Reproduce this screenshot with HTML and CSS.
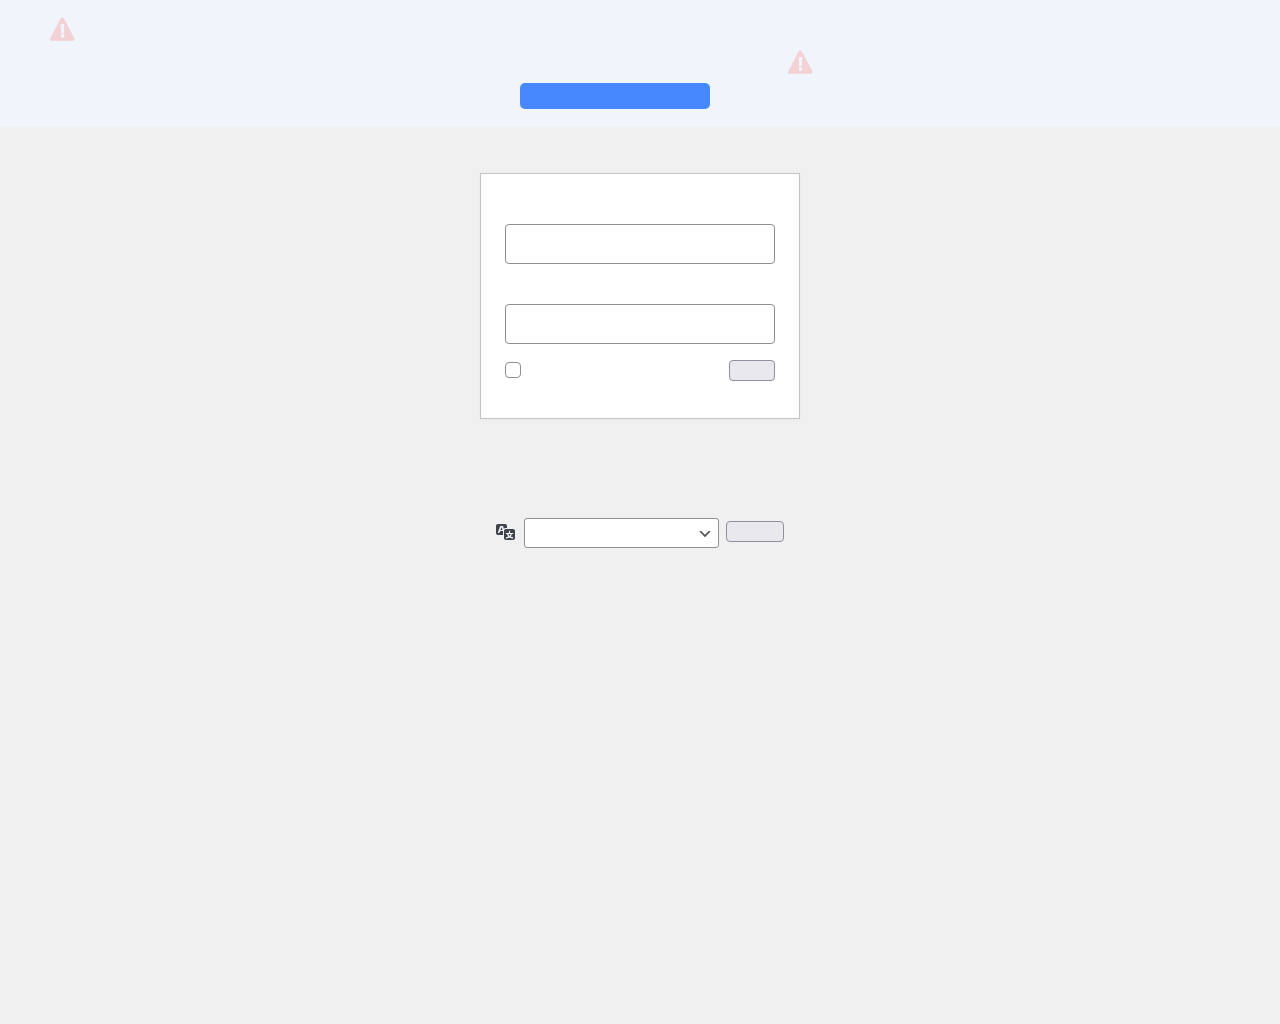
FILE: index.html
```html
<!DOCTYPE html>
<html lang="en">
  <head>
    <meta charset="utf-8">
    <meta name="viewport" content="width=device-width, initial-scale=1.0">
    <title>Log In</title>
    <link rel="stylesheet" href="styles.css">
  </head>
  <body>
    <svg class="defs" width="0" height="0" aria-hidden="true">
      <symbol id="warning" viewBox="0 0 26 25">
        <path fill-rule="evenodd" d="M12.5 .4c.6 0 1.100.3 1.500 1l10.400 20c.6 1.200 0 2.400-1.300 2.400H1.400C.1 23.800-.5 22.600.1 21.400l10.400-20c.4-.7.9-1 2-1zM10.800 7l.3 9.500h2.800l.3-9.500zM12.500 17.100a1.800 1.800 0 1 0 0 3.600 1.800 1.800 0 0 0 0-3.600z"/>
      </symbol>
    </svg>

    <section class="notice">
      <div class="notice-row row-first">
        <svg class="warn"><use href="#warning"/></svg>
      </div>
      <div class="notice-row row-second">
        <svg class="warn"><use href="#warning"/></svg>
      </div>
      <div class="notice-row row-third">
        <a class="notice-button" href="#" aria-label="Continue"></a>
      </div>
    </section>

    <main class="login">
      <form class="card">
        <input class="field" type="text" aria-label="Username">
        <input class="field field-last" type="password" aria-label="Password">
        <div class="submit-row">
          <input class="check" type="checkbox" aria-label="Remember me">
          <button class="btn btn-login" type="button" aria-label="Log in"></button>
        </div>
      </form>

      <div class="language">
        <svg class="lang-icon" viewBox="0 0 20 20" aria-hidden="true">
          <path d="M11 7H9.490c-.63 0-1.250.3-1.590.7L7 5H4.130l-2.390 7h1.690l.74-2H7v4H2c-1.100 0-2-.9-2-2V5c0-1.100.9-2 2-2h7c1.100 0 2 .9 2 2v2zM6.510 9H4.490l1-2.930zM10 8h7c1.100 0 2 .9 2 2v7c0 1.100-.9 2-2 2h-7c-1.100 0-2-.9-2-2v-7c0-1.100.9-2 2-2zm7.250 5v-1.080h-3.170V9.750h-1.160v2.170H9.750V13h1.280c.11.85.56 1.850 1.280 2.620-.87.36-1.890.62-2.310.62-.01.02.22.97.2 1.460.84 0 2.210-.5 3.280-1.150 1.090.65 2.480 1.150 3.340 1.150-.02-.49.2-1.440.2-1.460-.43 0-1.490-.27-2.380-.63.7-.77 1.140-1.770 1.250-2.610h1.360zm-3.810 1.930c-.5-.46-.85-1.130-1.010-1.930h2.090c-.17.8-.51 1.470-1 1.930l-.04.03s-.03-.02-.04-.03z"/>
        </svg>
        <select class="lang-select" aria-label="Language"></select>
        <button class="btn btn-change" type="button" aria-label="Change"></button>
      </div>
    </main>
  </body>
</html>
```

FILE: styles.css
```css
:root {
  --bg: #f0f0f1;
  --notice: #f0f5fc;
  --accent: #4688ff;
  --warn: #f3d1d5;
  --line: #8c8f94;
  --btn: #e9e8ed;
  --btn-line: #8f8f9d;
}

html, body {
  margin: 0;
  padding: 0;
}
body {
  background: var(--bg);
  font-family: "Noto Sans", sans-serif;
  min-height: 1024px;
}
.defs {
  display: block;
  height: 0;
}

/* top notice */
.notice {
  background: var(--notice);
  height: 127px;
  box-sizing: border-box;
  padding-top: 17px;
}
.notice-row {
  display: flex;
}
.row-first {
  height: 33px;
  padding-left: 50px;
}
.row-second {
  height: 33px;
  padding-left: 788px;
}
.row-third {
  padding-left: 520px;
}
.warn {
  width: 26px;
  height: 25px;
  fill: var(--warn);
}
.notice-button {
  display: block;
  width: 190px;
  height: 26px;
  background: var(--accent);
  border-radius: 5px;
}

/* login box */
.login {
  width: 320px;
  margin: 0 auto;
  padding-top: 46px;
}
.card {
  background: #fff;
  border: 1px solid #c3c4c7;
  box-shadow: 0 1px 3px rgba(0, 0, 0, 0.04);
  box-sizing: border-box;
  height: 246px;
  padding: 50px 24px 0;
}
.field {
  display: block;
  box-sizing: border-box;
  width: 100%;
  height: 40px;
  margin: 0 0 40px;
  padding: 0 8px;
  background: #fff;
  border: 1px solid var(--line);
  border-radius: 4px;
}
.field-last {
  margin-bottom: 16px;
}
.submit-row {
  display: flex;
  justify-content: space-between;
  align-items: flex-start;
  height: 21px;
}
.check {
  appearance: none;
  box-sizing: border-box;
  width: 16px;
  height: 16px;
  margin: 2px 0 0;
  background: #fff;
  border: 1px solid var(--line);
  border-radius: 4px;
}
.btn {
  display: block;
  box-sizing: border-box;
  padding: 0;
  background: var(--btn);
  border: 1px solid var(--btn-line);
  border-radius: 4px;
}
.btn-login {
  width: 46px;
  height: 21px;
}

/* language switcher */
.language {
  display: flex;
  align-items: flex-start;
  margin: 99px 0 0 16px;
  height: 30px;
}
.lang-icon {
  width: 20px;
  height: 20px;
  fill: #3c434a;
  margin: 3px 8px 0 0;
}
.lang-select {
  appearance: none;
  box-sizing: border-box;
  width: 195px;
  height: 30px;
  margin-right: 7px;
  background: #fff url("data:image/svg+xml;charset=US-ASCII,%3Csvg%20width%3D%2220%22%20height%3D%2220%22%20xmlns%3D%22http%3A%2F%2Fwww.w3.org%2F2000%2Fsvg%22%3E%3Cpath%20d%3D%22M5%206l5%205%205-5%202%201-7%207-7-7%202-1z%22%20fill%3D%22%23555%22%2F%3E%3C%2Fsvg%3E") no-repeat right 5px top 55%;
  background-size: 16px 16px;
  border: 1px solid var(--line);
  border-radius: 3px;
}
.btn-change {
  width: 58px;
  height: 21px;
  margin-top: 3px;
}
```
